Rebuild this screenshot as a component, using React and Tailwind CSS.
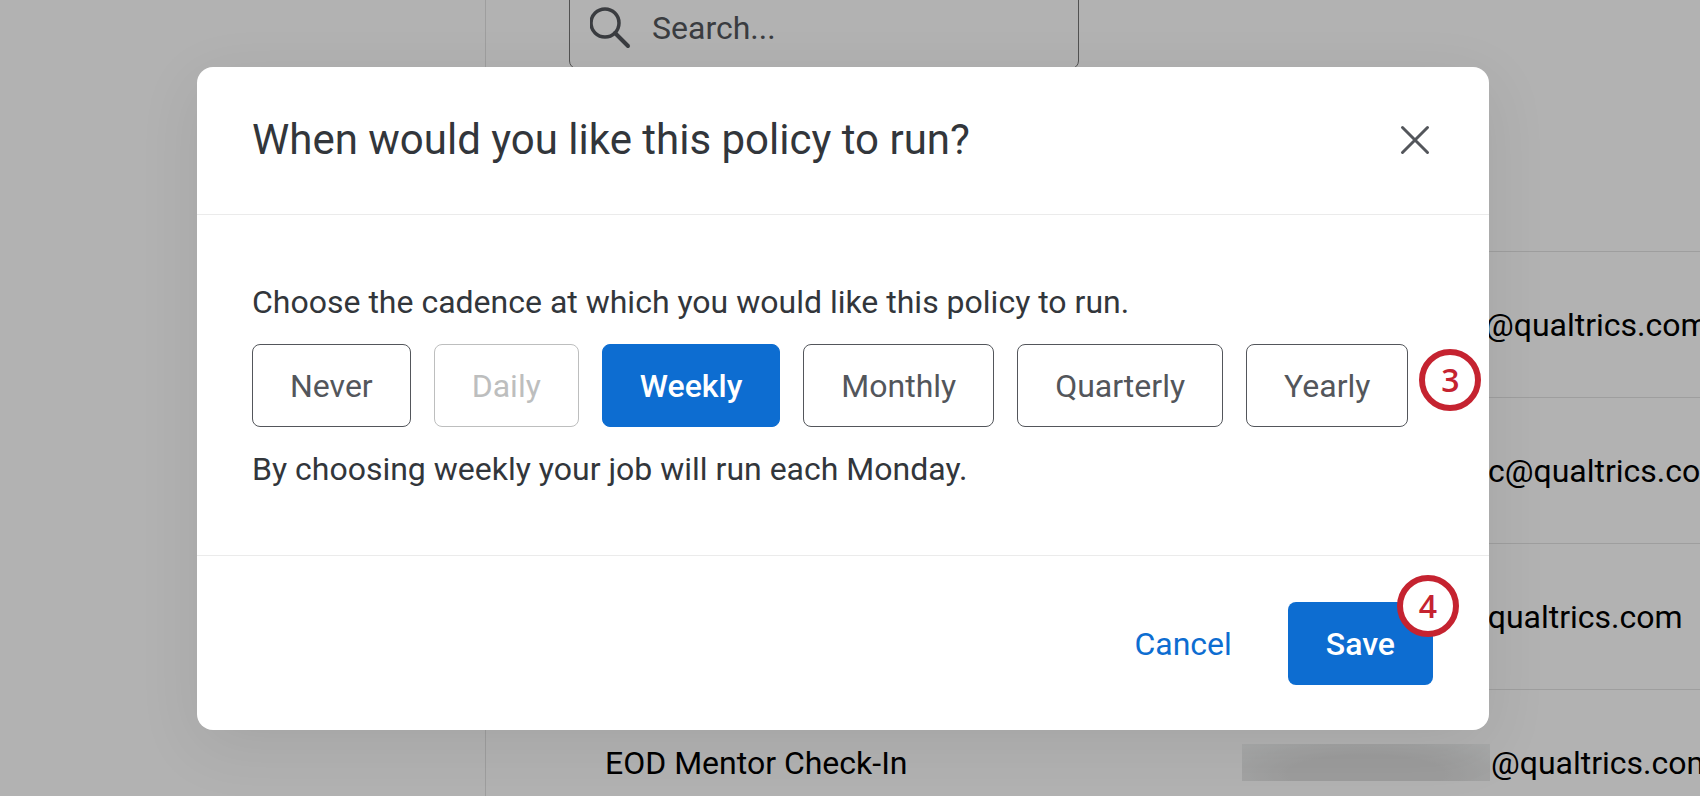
import React, { useState } from 'react'

const cadences = [
  { id: 'never', label: 'Never' },
  { id: 'daily', label: 'Daily', disabled: true },
  { id: 'weekly', label: 'Weekly' },
  { id: 'monthly', label: 'Monthly' },
  { id: 'quarterly', label: 'Quarterly' },
  { id: 'yearly', label: 'Yearly', step: 3 },
]

// `indent` is where the visible part of the address starts in its column
const rows = [
  { name: '', indent: 'pl-[243px]', email: '@qualtrics.com' },
  { name: '', indent: 'pl-[246px]', email: 'c@qualtrics.com' },
  { name: '', indent: 'pl-[217px]', email: '@qualtrics.com' },
  { name: 'EOD Mentor Check-In', redacted: true, email: '@qualtrics.com' },
]

function StepBadge({ children, className }) {
  return (
    <span
      className={`absolute flex size-[62px] items-center justify-center rounded-full border-6 border-[#c52330] bg-white font-['Open_Sans',sans-serif] text-[32px] font-semibold text-[#c52330] ${className}`}
    >
      {children}
    </span>
  )
}

function PolicyPage() {
  return (
    <div className="flex h-full">
      <aside className="w-[486px] shrink-0 border-r border-[#e3e3e3]" />
      <main className="min-w-0 flex-1 overflow-hidden pl-[83px]">
        <label className="-mt-[14px] flex h-[83px] w-[510px] items-center rounded-lg border border-[#767676] pl-5 text-[#53575c]">
          <svg className="mr-5 size-[42px] shrink-0" viewBox="0 0 42 42" fill="none" stroke="currentColor" strokeWidth="3.5" strokeLinecap="round" aria-hidden="true">
            <circle cx="15" cy="16" r="14" />
            <path d="M25 26 L38 39" strokeWidth="4" />
          </svg>
          <input
            type="text"
            aria-label="Search"
            placeholder="Search..."
            className="min-w-0 flex-1 bg-transparent outline-none placeholder:text-[#53575c]"
          />
        </label>
        <table className="mt-[182px] w-full table-fixed border-collapse text-left whitespace-nowrap text-black">
          <tbody>
            {rows.map((row, i) => (
              <tr key={i} className="h-[146px] border-t border-[#e3e3e3]">
                <td className="w-[673px] pl-9">{row.name}</td>
                <td className={`overflow-hidden ${row.indent || ''}`}>
                  <div className="flex items-center">
                    {row.redacted && (
                      <span className="mr-px h-[37px] w-[248px] shrink-0 bg-[radial-gradient(ellipse_at_50%_80%,#e0e0e0_45%,#f2f4f4)]" />
                    )}
                    <span>{row.email}</span>
                  </div>
                </td>
              </tr>
            ))}
          </tbody>
        </table>
      </main>
    </div>
  )
}

function CadenceButton({ cadence, selected, onSelect }) {
  let look = 'border-[#53565b] text-[#53565b] bg-white'
  if (cadence.disabled) look = 'border-[#bdbebe] text-[#bdbebe] bg-white'
  if (selected) look = 'border-[#0d6dd1] bg-[#0d6dd1] text-white font-medium'

  return (
    <div className="relative">
      <button
        type="button"
        disabled={cadence.disabled}
        aria-pressed={selected}
        onClick={() => onSelect(cadence.id)}
        className={`h-[83px] rounded-lg border px-[37px] ${look}`}
      >
        {cadence.label}
      </button>
      {cadence.step && <StepBadge className="top-[5px] left-full ml-[11px]">{cadence.step}</StepBadge>}
    </div>
  )
}

export default function App() {
  const [selected, setSelected] = useState('weekly')

  return (
    <div className="relative h-screen overflow-hidden bg-white font-['Roboto',sans-serif] text-[32px] leading-[44px]">
      <PolicyPage />

      <div className="absolute inset-0 flex items-start bg-black/30 pt-[67px] pr-[211px] pl-[197px]">
        <div
          role="dialog"
          aria-modal="true"
          aria-labelledby="policy-title"
          className="flex-1 rounded-2xl bg-white text-[#32363b] shadow-[0_16px_64px_rgba(0,0,0,0.08)]"
        >
          <header className="flex h-[148px] items-center justify-between border-b border-[#ebebeb] pr-[58px] pb-0.5 pl-[55px]">
            <h2 id="policy-title" className="text-[42px]">
              When would you like this policy to run?
            </h2>
            <button type="button" aria-label="Close" className="text-[#53565b]">
              <svg className="size-8" viewBox="0 0 32 32" fill="none" stroke="currentColor" strokeWidth="3" strokeLinecap="round">
                <path d="M3.5 3.5 L28.5 28.5 M28.5 3.5 L3.5 28.5" />
              </svg>
            </button>
          </header>

          <div className="px-[55px] pt-[65px] pb-16">
            <p>Choose the cadence at which you would like this policy to run.</p>
            <div className="my-5 flex gap-[23px]">
              {cadences.map((cadence) => (
                <CadenceButton
                  key={cadence.id}
                  cadence={cadence}
                  selected={selected === cadence.id}
                  onSelect={setSelected}
                />
              ))}
            </div>
            <p>By choosing weekly your job will run each Monday.</p>
          </div>

          <footer className="flex items-center justify-end border-t border-[#ebebeb] pt-[46px] pr-14 pb-[45px]">
            <button type="button" className="mr-14 text-[#0d6dd1]">
              Cancel
            </button>
            <div className="relative">
              <button type="button" className="h-[83px] rounded-lg bg-[#0d6dd1] px-[38px] font-medium text-white">
                Save
              </button>
              <StepBadge className="-top-[27px] -right-[26px]">4</StepBadge>
            </div>
          </footer>
        </div>
      </div>
    </div>
  )
}
